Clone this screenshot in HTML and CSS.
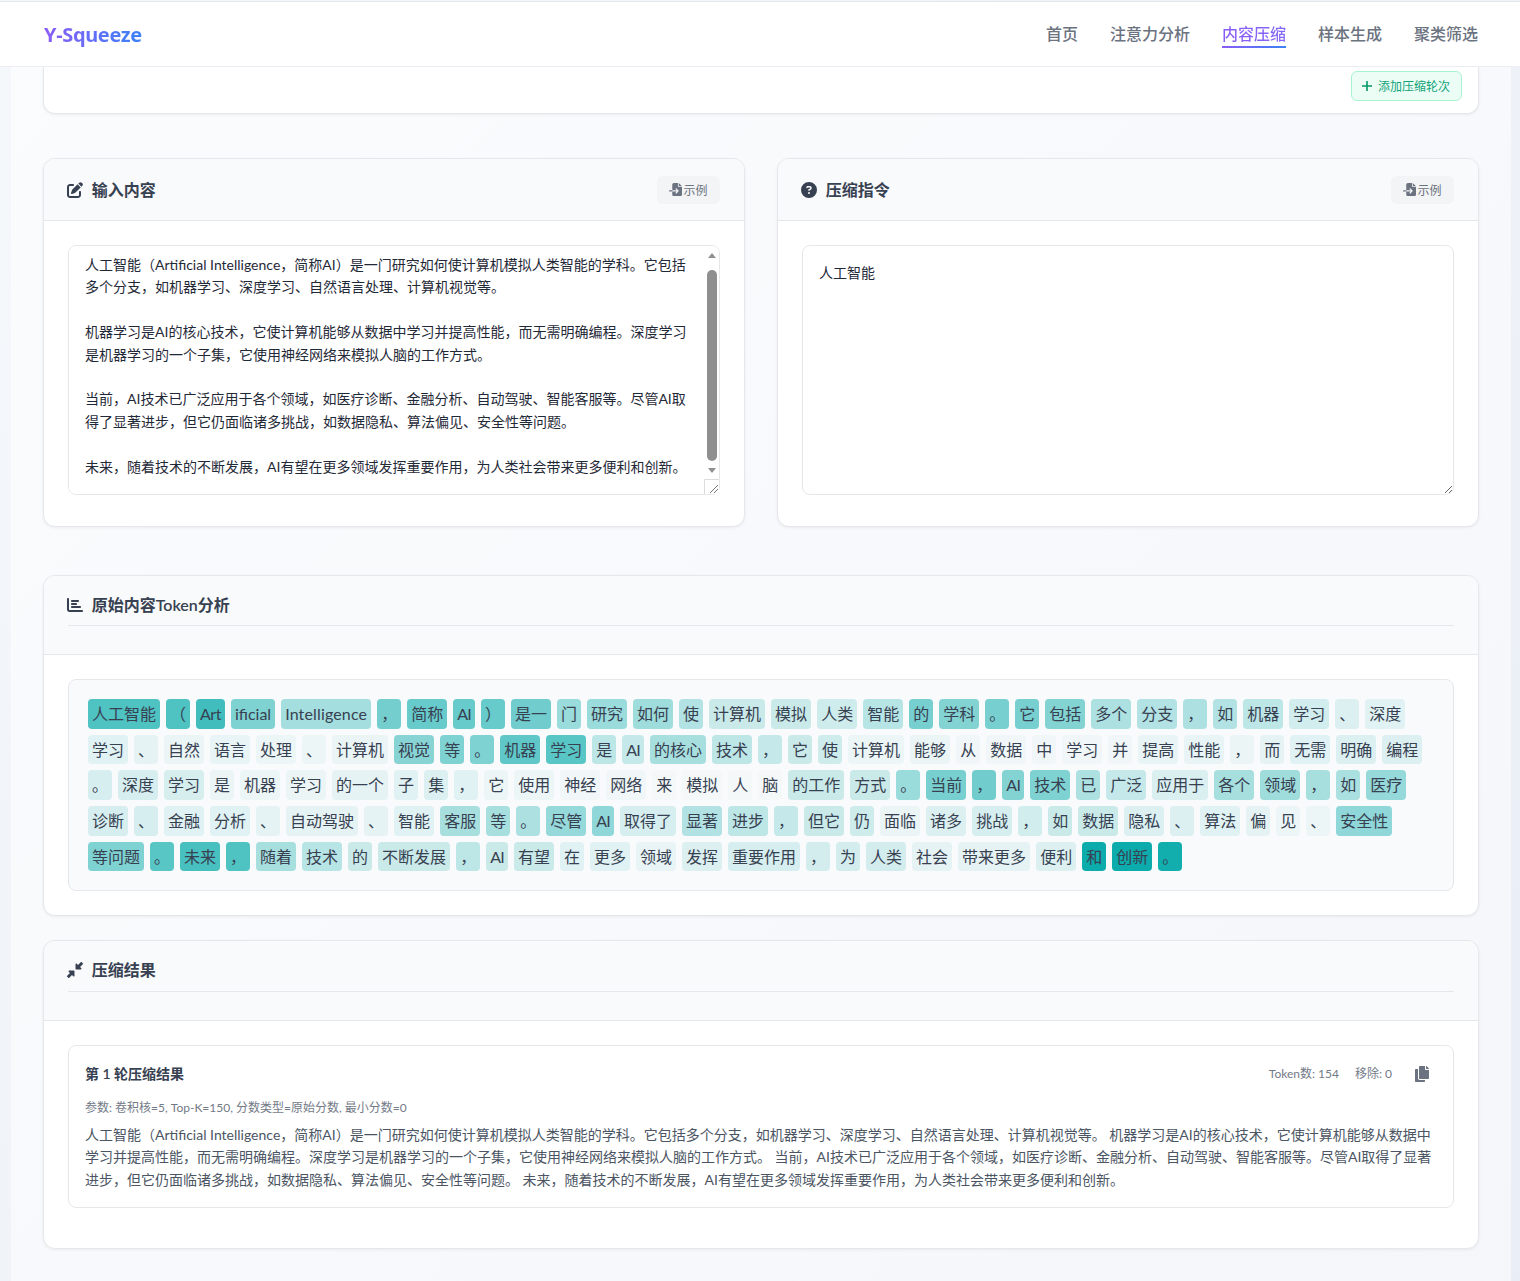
FILE: index.html
```html
<!DOCTYPE html>
<html lang="zh-CN">
<head>
<meta charset="utf-8">
<title>Y-Squeeze</title>
<link rel="stylesheet" href="styles.css">
</head>
<body>
<header class="topbar">
  <div class="logo">Y-Squeeze</div>
  <nav class="nav">
    <a class="nav-link">首页</a>
    <a class="nav-link">注意力分析</a>
    <a class="nav-link active">内容压缩</a>
    <a class="nav-link">样本生成</a>
    <a class="nav-link">聚类筛选</a>
  </nav>
</header>
<main class="page">
  <section class="card rounds-card">
    <button class="add-btn"><svg class="plus" viewBox="0 0 12 12"><path d="M6 1v10M1 6h10"/></svg>添加压缩轮次</button>
  </section>

  <div class="inputs">
    <section class="card">
      <div class="card-head split">
        <h2 class="title"><svg class="icon" viewBox="0 0 512 512"><path d="M471.6 21.7c-21.9-21.9-57.3-21.9-79.2 0L362.3 51.7l97.9 97.9 30.1-30.1c21.9-21.9 21.9-57.3 0-79.2L471.6 21.7zm-299.2 220c-6.1 6.1-10.8 13.6-13.5 21.9l-29.6 88.8c-2.9 8.6-.6 18.1 5.8 24.6s15.9 8.7 24.6 5.8l88.8-29.6c8.2-2.7 15.7-7.4 21.9-13.5L437.7 172.3 339.7 74.3 172.4 241.7zM96 64C43 64 0 107 0 160V416c0 53 43 96 96 96H352c53 0 96-43 96-96V320c0-17.7-14.3-32-32-32s-32 14.3-32 32v96c0 17.7-14.3 32-32 32H96c-17.7 0-32-14.3-32-32V160c0-17.7 14.3-32 32-32h96c17.7 0 32-14.3 32-32s-14.3-32-32-32H96z"/></svg>输入内容</h2>
        <button class="sample-btn"><svg class="icon-sm" viewBox="0 0 512 512"><path d="M128 64c0-35.3 28.7-64 64-64H352V128c0 17.7 14.3 32 32 32H512V448c0 35.3-28.7 64-64 64H192c-35.3 0-64-28.7-64-64V336H302.1l-39 39c-9.4 9.4-9.4 24.6 0 33.9s24.6 9.4 33.9 0l80-80c9.4-9.4 9.4-24.6 0-33.9l-80-80c-9.4-9.4-24.6-9.4-33.9 0s-9.4 24.6 0 33.9l39 39H128V64zm0 224v48H24c-13.3 0-24-10.7-24-24s10.7-24 24-24H128zM512 128H384V0L512 128z"/></svg>示例</button>
      </div>
      <div class="card-body">
        <div class="field-wrap">
          <textarea class="field field-scroll" id="content" spellcheck="false">人工智能（Artificial Intelligence，简称AI）是一门研究如何使计算机模拟人类智能的学科。它包括多个分支，如机器学习、深度学习、自然语言处理、计算机视觉等。

机器学习是AI的核心技术，它使计算机能够从数据中学习并提高性能，而无需明确编程。深度学习是机器学习的一个子集，它使用神经网络来模拟人脑的工作方式。

当前，AI技术已广泛应用于各个领域，如医疗诊断、金融分析、自动驾驶、智能客服等。尽管AI取得了显著进步，但它仍面临诸多挑战，如数据隐私、算法偏见、安全性等问题。

未来，随着技术的不断发展，AI有望在更多领域发挥重要作用，为人类社会带来更多便利和创新。</textarea>
          <div class="sb"><span class="sb-btn"><i class="sb-up"></i></span><span class="sb-track"><i class="sb-thumb"></i></span><span class="sb-btn"><i class="sb-down"></i></span></div>
        </div>
      </div>
    </section>
    <section class="card">
      <div class="card-head split">
        <h2 class="title"><svg class="icon" viewBox="0 0 512 512"><path d="M256 512A256 256 0 1 0 256 0a256 256 0 1 0 0 512zM169.8 165.3c7.9-22.3 29.1-37.3 52.8-37.3h58.3c34.9 0 63.1 28.3 63.1 63.1c0 22.6-12.1 43.5-31.7 54.8L280 264.4c-.2 13-10.9 23.6-24 23.6c-13.3 0-24-10.7-24-24V250.5c0-8.6 4.6-16.5 12.1-20.8l44.3-25.4c4.7-2.7 7.6-7.7 7.6-13.1c0-8.4-6.8-15.1-15.1-15.1H222.6c-3.4 0-6.4 2.1-7.5 5.3l-.4 1.2c-4.4 12.5-18.2 19-30.6 14.6s-19-18.2-14.6-30.6l.4-1.2zM224 352a32 32 0 1 1 64 0 32 32 0 1 1 -64 0z"/></svg>压缩指令</h2>
        <button class="sample-btn"><svg class="icon-sm" viewBox="0 0 512 512"><path d="M128 64c0-35.3 28.7-64 64-64H352V128c0 17.7 14.3 32 32 32H512V448c0 35.3-28.7 64-64 64H192c-35.3 0-64-28.7-64-64V336H302.1l-39 39c-9.4 9.4-9.4 24.6 0 33.9s24.6 9.4 33.9 0l80-80c9.4-9.4 9.4-24.6 0-33.9l-80-80c-9.4-9.4-24.6-9.4-33.9 0s-9.4 24.6 0 33.9l39 39H128V64zm0 224v48H24c-13.3 0-24-10.7-24-24s10.7-24 24-24H128zM512 128H384V0L512 128z"/></svg>示例</button>
      </div>
      <div class="card-body">
        <div class="field-wrap">
          <textarea class="field" spellcheck="false">人工智能</textarea>
        </div>
      </div>
    </section>
  </div>

  <section class="card token-card">
    <div class="card-head stacked">
      <h2 class="title ruled"><svg class="icon" viewBox="0 0 512 512"><path d="M32 32c17.7 0 32 14.3 32 32V400c0 8.8 7.2 16 16 16H480c17.7 0 32 14.3 32 32s-14.3 32-32 32H80c-44.2 0-80-35.8-80-80V64C0 46.3 14.3 32 32 32zm96 96c0-17.7 14.3-32 32-32l192 0c17.7 0 32 14.3 32 32s-14.3 32-32 32l-192 0c-17.7 0-32-14.3-32-32zm32 64H288c17.7 0 32 14.3 32 32s-14.3 32-32 32H160c-17.7 0-32-14.3-32-32s14.3-32 32-32zm0 96H416c17.7 0 32 14.3 32 32s-14.3 32-32 32H160c-17.7 0-32-14.3-32-32s14.3-32 32-32z"/></svg>原始内容Token分析</h2>
    </div>
    <div class="card-body">
      <div class="tokens"><span class="tok" style="--a:.72">人工智能</span><span class="tok" style="--a:.72">（</span><span class="tok tight" style="--a:.78">Art</span><span class="tok" style="--a:.52">ificial</span><span class="tok loose" style="--a:.36">Intelligence</span><span class="tok" style="--a:.56">，</span><span class="tok" style="--a:.62">简称</span><span class="tok tight-ai" style="--a:.62">AI</span><span class="tok" style="--a:.62">）</span><span class="tok" style="--a:.58">是一</span><span class="tok" style="--a:.4">门</span><span class="tok" style="--a:.4">研究</span><span class="tok" style="--a:.38">如何</span><span class="tok" style="--a:.3">使</span><span class="tok" style="--a:.2">计算机</span><span class="tok" style="--a:.2">模拟</span><span class="tok" style="--a:.18">人类</span><span class="tok" style="--a:.28">智能</span><span class="tok" style="--a:.55">的</span><span class="tok" style="--a:.5">学科</span><span class="tok" style="--a:.55">。</span><span class="tok" style="--a:.55">它</span><span class="tok" style="--a:.5">包括</span><span class="tok" style="--a:.32">多个</span><span class="tok" style="--a:.3">分支</span><span class="tok" style="--a:.32">，</span><span class="tok" style="--a:.3">如</span><span class="tok" style="--a:.25">机器</span><span class="tok" style="--a:.17">学习</span><span class="tok" style="--a:.12">、</span><span class="tok" style="--a:.1">深度</span><span class="tok" style="--a:.1">学习</span><span class="tok" style="--a:.08">、</span><span class="tok" style="--a:.06">自然</span><span class="tok" style="--a:.07">语言</span><span class="tok" style="--a:.05">处理</span><span class="tok" style="--a:.05">、</span><span class="tok" style="--a:.06">计算机</span><span class="tok" style="--a:.48">视觉</span><span class="tok" style="--a:.52">等</span><span class="tok" style="--a:.52">。</span><span class="tok" style="--a:.65">机器</span><span class="tok" style="--a:.68">学习</span><span class="tok" style="--a:.25">是</span><span class="tok tight-ai" style="--a:.22">AI</span><span class="tok" style="--a:.35">的核心</span><span class="tok" style="--a:.25">技术</span><span class="tok" style="--a:.22">，</span><span class="tok" style="--a:.2">它</span><span class="tok" style="--a:.18">使</span><span class="tok" style="--a:.05">计算机</span><span class="tok" style="--a:.06">能够</span><span class="tok" style="--a:.03">从</span><span class="tok" style="--a:.03">数据</span><span class="tok" style="--a:.03">中</span><span class="tok" style="--a:.03">学习</span><span class="tok" style="--a:.03">并</span><span class="tok" style="--a:.07">提高</span><span class="tok" style="--a:.07">性能</span><span class="tok" style="--a:.06">，</span><span class="tok" style="--a:.08">而</span><span class="tok" style="--a:.1">无需</span><span class="tok" style="--a:.12">明确</span><span class="tok" style="--a:.12">编程</span><span class="tok" style="--a:.15">。</span><span class="tok" style="--a:.15">深度</span><span class="tok" style="--a:.14">学习</span><span class="tok" style="--a:.06">是</span><span class="tok" style="--a:.05">机器</span><span class="tok" style="--a:.06">学习</span><span class="tok" style="--a:.08">的一个</span><span class="tok" style="--a:.1">子</span><span class="tok" style="--a:.12">集</span><span class="tok" style="--a:.1">，</span><span class="tok" style="--a:.05">它</span><span class="tok" style="--a:.05">使用</span><span class="tok" style="--a:.03">神经</span><span class="tok" style="--a:.03">网络</span><span class="tok" style="--a:.02">来</span><span class="tok" style="--a:.02">模拟</span><span class="tok" style="--a:.02">人</span><span class="tok" style="--a:.02">脑</span><span class="tok" style="--a:.2">的工作</span><span class="tok" style="--a:.2">方式</span><span class="tok" style="--a:.4">。</span><span class="tok" style="--a:.55">当前</span><span class="tok" style="--a:.58">，</span><span class="tok tight-ai" style="--a:.5">AI</span><span class="tok" style="--a:.52">技术</span><span class="tok" style="--a:.32">已</span><span class="tok" style="--a:.22">广泛</span><span class="tok" style="--a:.13">应用于</span><span class="tok" style="--a:.35">各个</span><span class="tok" style="--a:.38">领域</span><span class="tok" style="--a:.35">，</span><span class="tok" style="--a:.33">如</span><span class="tok" style="--a:.42">医疗</span><span class="tok" style="--a:.15">诊断</span><span class="tok" style="--a:.15">、</span><span class="tok" style="--a:.1">金融</span><span class="tok" style="--a:.1">分析</span><span class="tok" style="--a:.08">、</span><span class="tok" style="--a:.08">自动驾驶</span><span class="tok" style="--a:.08">、</span><span class="tok" style="--a:.1">智能</span><span class="tok" style="--a:.35">客服</span><span class="tok" style="--a:.35">等</span><span class="tok" style="--a:.32">。</span><span class="tok" style="--a:.42">尽管</span><span class="tok tight-ai" style="--a:.45">AI</span><span class="tok" style="--a:.15">取得了</span><span class="tok" style="--a:.3">显著</span><span class="tok" style="--a:.25">进步</span><span class="tok" style="--a:.22">，</span><span class="tok" style="--a:.2">但它</span><span class="tok" style="--a:.18">仍</span><span class="tok" style="--a:.06">面临</span><span class="tok" style="--a:.12">诸多</span><span class="tok" style="--a:.15">挑战</span><span class="tok" style="--a:.17">，</span><span class="tok" style="--a:.2">如</span><span class="tok" style="--a:.2">数据</span><span class="tok" style="--a:.12">隐私</span><span class="tok" style="--a:.12">、</span><span class="tok" style="--a:.1">算法</span><span class="tok" style="--a:.08">偏</span><span class="tok" style="--a:.05">见</span><span class="tok" style="--a:.05">、</span><span class="tok" style="--a:.45">安全性</span><span class="tok" style="--a:.52">等问题</span><span class="tok" style="--a:.68">。</span><span class="tok" style="--a:.75">未来</span><span class="tok" style="--a:.72">，</span><span class="tok" style="--a:.35">随着</span><span class="tok" style="--a:.28">技术</span><span class="tok" style="--a:.2">的</span><span class="tok" style="--a:.2">不断发展</span><span class="tok" style="--a:.25">，</span><span class="tok tight-ai" style="--a:.2">AI</span><span class="tok" style="--a:.2">有望</span><span class="tok" style="--a:.1">在</span><span class="tok" style="--a:.1">更多</span><span class="tok" style="--a:.07">领域</span><span class="tok" style="--a:.12">发挥</span><span class="tok" style="--a:.15">重要作用</span><span class="tok" style="--a:.16">，</span><span class="tok" style="--a:.16">为</span><span class="tok" style="--a:.16">人类</span><span class="tok" style="--a:.08">社会</span><span class="tok" style="--a:.08">带来更多</span><span class="tok" style="--a:.12">便利</span><span class="tok" style="--a:1">和</span><span class="tok" style="--a:1">创新</span><span class="tok" style="--a:.98">。</span></div>
    </div>
  </section>

  <section class="card result-card">
    <div class="card-head stacked">
      <h2 class="title ruled"><svg class="icon" viewBox="0 0 512 512"><path d="M439 7c9.4-9.4 24.6-9.4 33.9 0l32 32c9.4 9.4 9.4 24.6 0 33.9l-87 87 39 39c6.9 6.9 8.9 17.2 5.2 26.2s-12.5 14.8-22.2 14.8H296c-13.3 0-24-10.7-24-24V72c0-9.7 5.8-18.5 14.8-22.2s19.3-1.7 26.2 5.2l39 39L439 7zM72 272H216c13.3 0 24 10.7 24 24V440c0 9.7-5.8 18.5-14.8 22.2s-19.3 1.7-26.2-5.2l-39-39L73 505c-9.4 9.4-24.6 9.4-33.9 0L7 473c-9.4-9.4-9.4-24.6 0-33.9l87-87L55 313c-6.9-6.9-8.9-17.2-5.2-26.2s12.5-14.8 22.2-14.8z"/></svg>压缩结果</h2>
    </div>
    <div class="card-body">
      <article class="result">
        <div class="result-head">
          <h3 class="result-title">第 1 轮压缩结果</h3>
          <div class="result-meta">
            <span>Token数: 154</span>
            <span>移除: 0</span>
            <svg class="copy" viewBox="0 0 448 512"><path d="M320 448v40c0 13.255-10.745 24-24 24H24c-13.255 0-24-10.745-24-24V120c0-13.255 10.745-24 24-24h72v296c0 30.879 25.121 56 56 56h168zm0-344V0H152c-13.255 0-24 10.745-24 24v368c0 13.255 10.745 24 24 24h272c13.255 0 24-10.745 24-24V128H344c-13.2 0-24-10.8-24-24zm120.971-31.029L375.029 7.029A24 24 0 0 0 358.059 0H352v96h96v-6.059a24 24 0 0 0-7.029-16.97z"/></svg>
          </div>
        </div>
        <p class="params">参数: 卷积核=5, Top-K=150, 分数类型=原始分数, 最小分数=0</p>
        <p class="result-text">人工智能（Artificial Intelligence，简称AI）是一门研究如何使计算机模拟人类智能的学科。它包括多个分支，如机器学习、深度学习、自然语言处理、计算机视觉等。 机器学习是AI的核心技术，它使计算机能够从数据中学习并提高性能，而无需明确编程。深度学习是机器学习的一个子集，它使用神经网络来模拟人脑的工作方式。 当前，AI技术已广泛应用于各个领域，如医疗诊断、金融分析、自动驾驶、智能客服等。尽管AI取得了显著进步，但它仍面临诸多挑战，如数据隐私、算法偏见、安全性等问题。 未来，随着技术的不断发展，AI有望在更多领域发挥重要作用，为人类社会带来更多便利和创新。</p>
      </article>
    </div>
  </section>
</main>
<script src="app.js"></script>
</body>
</html>
```
FILE: styles.css
```css
* { box-sizing: border-box; }
html, body { margin: 0; padding: 0; }
body {
  width: 1520px;
  font-family: Lato, "Noto Sans CJK SC", sans-serif;
  font-size: 16px;
  line-height: 1.6;
  color: #374151;
  background: linear-gradient(135deg, #f5f8fb 0%, #e9edf5 100%);
}
.topbar {
  height: 66px;
  margin-top: 1px;
  padding: 0 42px 0 44px;
  display: flex;
  align-items: center;
  justify-content: space-between;
  background: #fff;
  border-top: 1px solid #e5e7eb;
  border-bottom: 1px solid #eceef4;
}
.logo {
  margin-top: 2px;
  font-family: "Noto Sans", sans-serif;
  font-size: 20px;
  font-weight: 700;
  letter-spacing: -.35px;
  background: linear-gradient(90deg, #8b5cf6, #3b82f6);
  -webkit-background-clip: text;
  background-clip: text;
  color: transparent;
}
.nav { display: flex; gap: 32px; }
.nav-link {
  position: relative;
  color: #6b7280;
  font-weight: 500;
}
.nav-link.active {
  background: linear-gradient(90deg, #8b5cf6, #8267f6);
  -webkit-background-clip: text;
  background-clip: text;
  color: transparent;
}
.nav-link.active::after {
  content: "";
  position: absolute;
  left: 0;
  right: 0;
  bottom: -1px;
  height: 2px;
  background: linear-gradient(90deg, #8b5cf6, #3b82f6);
}
.page {
  width: 1500px;
  margin-left: 11px;
  padding: 0 32px 32px;
  background: rgba(255, 255, 255, .5);
}
.card {
  background: #fff;
  border: 1px solid #e5e7eb;
  border-radius: 12px;
  box-shadow: 0 1px 3px rgba(0, 0, 0, .06);
  overflow: hidden;
}
.rounds-card {
  height: 47px;
  margin-bottom: 44px;
  padding: 4px 16px 0 0;
  display: flex;
  justify-content: flex-end;
  align-items: flex-start;
  border-top: 0;
  border-radius: 0 0 12px 12px;
}
.add-btn {
  height: 30px;
  width: 111px;
  padding: 2px 2px 0 0;
  display: flex;
  align-items: center;
  justify-content: center;
  gap: 5px;
  font: inherit;
  font-size: 12px;
  color: #10a37a;
  background: #ecfdf5;
  border: 1px solid #a7f3d0;
  border-radius: 6px;
}
.plus { width: 12px; height: 12px; fill: none; stroke: #059669; stroke-width: 1.6; margin-top: -3px; }
.inputs {
  display: grid;
  grid-template-columns: 1fr 1fr;
  gap: 32px;
  margin-bottom: 48px;
}
.card-head {
  background: #f9fafb;
  border-bottom: 1px solid #e5e7eb;
  padding: 16px 24px;
}
.split {
  height: 62px;
  display: flex;
  align-items: center;
  justify-content: space-between;
}
.stacked { height: 79px; }
.result-card .stacked { height: 80px; }
.title {
  margin: 0;
  display: flex;
  align-items: center;
  gap: 8px;
  font-size: 16px;
  font-weight: 600;
  color: #374151;
  line-height: 25.6px;
}
.ruled {
  height: 34px;
  padding-bottom: 8px;
  border-bottom: 1px solid #e5e7eb;
}
.result-card .ruled { height: 35px; }
.icon { width: 16px; height: 16px; fill: #374151; flex: none; margin-left: -.7px; margin-right: .4px; }
.sample-btn {
  height: 28px;
  width: 63px;
  padding: 2px 0 0;
  display: flex;
  align-items: center;
  justify-content: center;
  gap: 1px;
  font: inherit;
  font-size: 12px;
  color: #6b7280;
  background: #f3f4f6;
  border: 0;
  border-radius: 6px;
}
.icon-sm { width: 13px; height: 13px; fill: #6b7280; margin-top: -2px; }
.card-body { padding: 24px; }
.field-wrap { position: relative; margin-bottom: 7px; }
.field {
  display: block;
  width: 100%;
  height: 250px;
  padding: 16px;
  font-family: Lato, "Noto Sans CJK SC", sans-serif;
  font-size: 14px;
  line-height: 22.4px;
  color: #1f2937;
  background: #fff;
  border: 1px solid #e5e7eb;
  border-radius: 8px;
  outline: 0;
}
.field-scroll { padding-right: 31px; }
.field-scroll::-webkit-resizer {
  background-color: #fff;
  background-image: url("data:image/svg+xml,%3Csvg xmlns='http://www.w3.org/2000/svg' width='15' height='15'%3E%3Cpath d='M.5 15V.5H15' fill='none' stroke='%23dcdcdc'/%3E%3Cpath d='M6 14l8-8M10 14l4-4' stroke='%23777' fill='none'/%3E%3C/svg%3E");
}
.sb {
  position: absolute;
  top: 1px;
  right: 1px;
  bottom: 16px;
  width: 15px;
  display: flex;
  flex-direction: column;
  border-radius: 0 7px 0 0;
  background: #fff;
}
.sb-btn { height: 18px; display: flex; align-items: center; justify-content: center; flex: none; }
.sb-up, .sb-down { width: 0; height: 0; border-left: 4.5px solid transparent; border-right: 4.5px solid transparent; }
.sb-up { border-bottom: 5px solid #909090; }
.sb-down { border-top: 5px solid #909090; }
.sb-track { flex: 1; padding: 6px 2.5px 0; }
.sb-thumb { display: block; height: 191px; border-radius: 5px; background: #8f8f8f; }
.token-card { margin-bottom: 24px; }
.tokens {
  display: flex;
  flex-wrap: wrap;
  padding: 16.2px 16px 15.8px;
  background: #f9fafb;
  border: 1px solid #e5e7eb;
  border-radius: 8px;
}
.tok {
  margin: 3px;
  padding: 2px 4px;
  height: 29.6px;
  line-height: 25.6px;
  border-radius: 4px;
  background: rgb(13 172 172 / var(--a));
}
.tight { letter-spacing: -.5px; }
.tight-ai { letter-spacing: -.75px; }
.loose { letter-spacing: .15px; }
.result {
  margin-bottom: 16px;
  padding: 16px;
  border: 1px solid #e5e7eb;
  border-radius: 8px;
  background: #fff;
}
.result-head {
  display: flex;
  justify-content: space-between;
  align-items: center;
  height: 24px;
  margin-bottom: 12px;
}
.result-title { margin: 0; font-size: 14px; font-weight: 600; color: #374151; }
.result-meta {
  display: flex;
  align-items: center;
  gap: 16px;
  font-size: 12px;
  color: #737a87;
}
.copy { width: 14px; height: 16px; fill: #6b7280; margin-left: 7px; margin-right: 8px; }
.params { margin: 0 0 6.7px; font-size: 12px; line-height: 19.2px; color: #737a87; }
.result-text { margin: 0 0 .3px; font-size: 14px; line-height: 22.4px; color: #4b5563; }
```
FILE: app.js
```js
document.getElementById('content').scrollTop = 8;
```
